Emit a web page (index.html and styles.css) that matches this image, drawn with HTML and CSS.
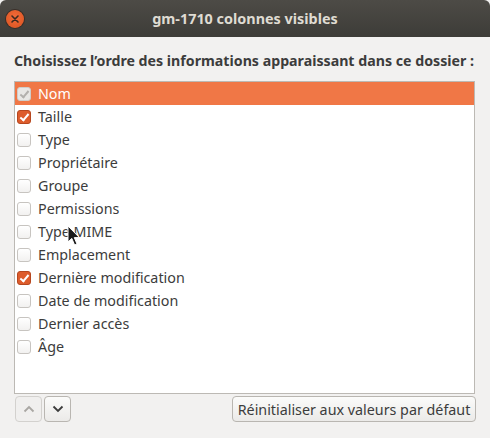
FILE: index.html
```html
<!DOCTYPE html>
<html lang="fr">
<head>
    <meta charset="UTF-8">
    <title>gm-1710 colonnes visibles</title>
    <link rel="stylesheet" href="styles.css">
</head>
<body>
    <div class="window">
        <div class="titlebar">
            <span class="close">
                <svg width="10" height="10" viewBox="0 0 10 10"><path d="M2 2 L8 8 M8 2 L2 8" stroke="#3c2a20" stroke-width="1.6" stroke-linecap="round"/></svg>
            </span>
            <span class="title">gm-1710 colonnes visibles</span>
        </div>
        <div class="content">
            <p class="label">Choisissez l’ordre des informations apparaissant dans ce dossier :</p>
            <ul class="list">
                <li class="row selected"><span class="check checked disabled"></span>Nom</li>
                <li class="row"><span class="check checked"></span>Taille</li>
                <li class="row"><span class="check"></span>Type</li>
                <li class="row"><span class="check"></span>Propriétaire</li>
                <li class="row"><span class="check"></span>Groupe</li>
                <li class="row"><span class="check"></span>Permissions</li>
                <li class="row"><span class="check"></span>Type MIME</li>
                <li class="row"><span class="check"></span>Emplacement</li>
                <li class="row"><span class="check checked"></span>Dernière modification</li>
                <li class="row"><span class="check"></span>Date de modification</li>
                <li class="row"><span class="check"></span>Dernier accès</li>
                <li class="row"><span class="check"></span>Âge</li>
            </ul>
            <div class="actions">
                <div class="arrows">
                    <button class="btn arrow" disabled>
                        <svg width="12" height="8" viewBox="0 0 12 8"><path d="M1.5 6.5 L6 2 L10.5 6.5" fill="none" stroke="#a9a7a3" stroke-width="1.8"/></svg>
                    </button>
                    <button class="btn arrow">
                        <svg width="12" height="8" viewBox="0 0 12 8"><path d="M1.5 1.5 L6 6 L10.5 1.5" fill="none" stroke="#3c3c3c" stroke-width="1.8"/></svg>
                    </button>
                </div>
                <button class="btn reset">Réinitialiser aux valeurs par défaut</button>
            </div>
        </div>
        <svg class="cursor" width="14" height="22" viewBox="0 0 14 22">
            <path d="M1 1 L1 17 L4.8 13.4 L7.6 20 L10 19 L7.3 12.6 L12.4 12.6 Z" fill="#1a1a1a" stroke="#fff" stroke-width="1"/>
        </svg>
    </div>
</body>
</html>
```

FILE: styles.css
```css
html, body {
    margin: 0;
    padding: 0;
    background: #f2f1f0;
}

body {
    font-family: 'Noto Sans', 'Open Sans', sans-serif;
    font-size: 14px;
    color: #3c3c3c;
}

.window {
    position: relative;
    width: 490px;
    height: 438px;
    overflow: hidden;
}

.titlebar {
    position: relative;
    height: 37px;
    background: linear-gradient(#4d4b46, #3d3c38);
    border-radius: 6px 6px 0 0;
    display: flex;
    align-items: center;
    justify-content: center;
}

.title {
    color: #dfdbd2;
    font-weight: bold;
    font-size: 14.4px;
}

.close {
    position: absolute;
    left: 6px;
    top: 10px;
    width: 18px;
    height: 18px;
    border-radius: 50%;
    background: radial-gradient(circle at 50% 40%, #f26b3a, #d9521e);
    box-shadow: 0 0 0 1px #3a2e27;
    display: flex;
    align-items: center;
    justify-content: center;
}

.content {
    padding: 0 15px 0 14px;
}

.label {
    margin: 14px 0 10px;
    font-weight: bold;
    font-size: 14.2px;
    color: #3c3c3c;
    height: 20px;
    line-height: 20px;
    white-space: nowrap;
}

.list {
    list-style: none;
    margin: 0;
    padding: 0;
    height: 311px;
    background: #ffffff;
    border: 1px solid #bcb9b4;
}

.row {
    height: 23px;
    display: flex;
    align-items: center;
    gap: 7px;
    padding-left: 2px;
    font-size: 14.3px;
    color: #3c3c3c;
}

.row.selected {
    background: #f07746;
    color: #ffffff;
}

.check {
    width: 12px;
    height: 12px;
    border: 1px solid #c7c4c0;
    border-radius: 3px;
    background: linear-gradient(#ffffff, #f2f1f0);
    position: relative;
    flex: none;
}

.check.checked {
    background: #dd5c2c;
    border-color: #b6471f;
}

.check.checked::after {
    content: '';
    position: absolute;
    left: 4px;
    top: 1px;
    width: 3px;
    height: 7px;
    border: solid #ffffff;
    border-width: 0 2px 2px 0;
    transform: rotate(40deg);
}

.check.disabled {
    background: #e8e7e5;
    border-color: #cfcdca;
}

.check.disabled::after {
    border-color: #b2b0ad;
}

.actions {
    display: flex;
    justify-content: space-between;
    margin-top: 2px;
    padding-left: 1px;
}

.arrows {
    display: flex;
    gap: 2px;
}

.btn {
    height: 26px;
    border: 1px solid #b9b6b1;
    border-radius: 4px;
    background: linear-gradient(#fbfbfa, #ebeae8);
    font-family: inherit;
    font-size: 14.3px;
    color: #3c3c3c;
    padding: 0 4px;
    display: flex;
    align-items: center;
    justify-content: center;
    white-space: nowrap;
}

.arrow {
    width: 27px;
}

.arrow:disabled {
    border-color: #d3d1ce;
    background: #f0efee;
}

.reset {
    width: 244px;
    margin-right: -1px;
}

.cursor {
    position: absolute;
    left: 67px;
    top: 225px;
}
```
